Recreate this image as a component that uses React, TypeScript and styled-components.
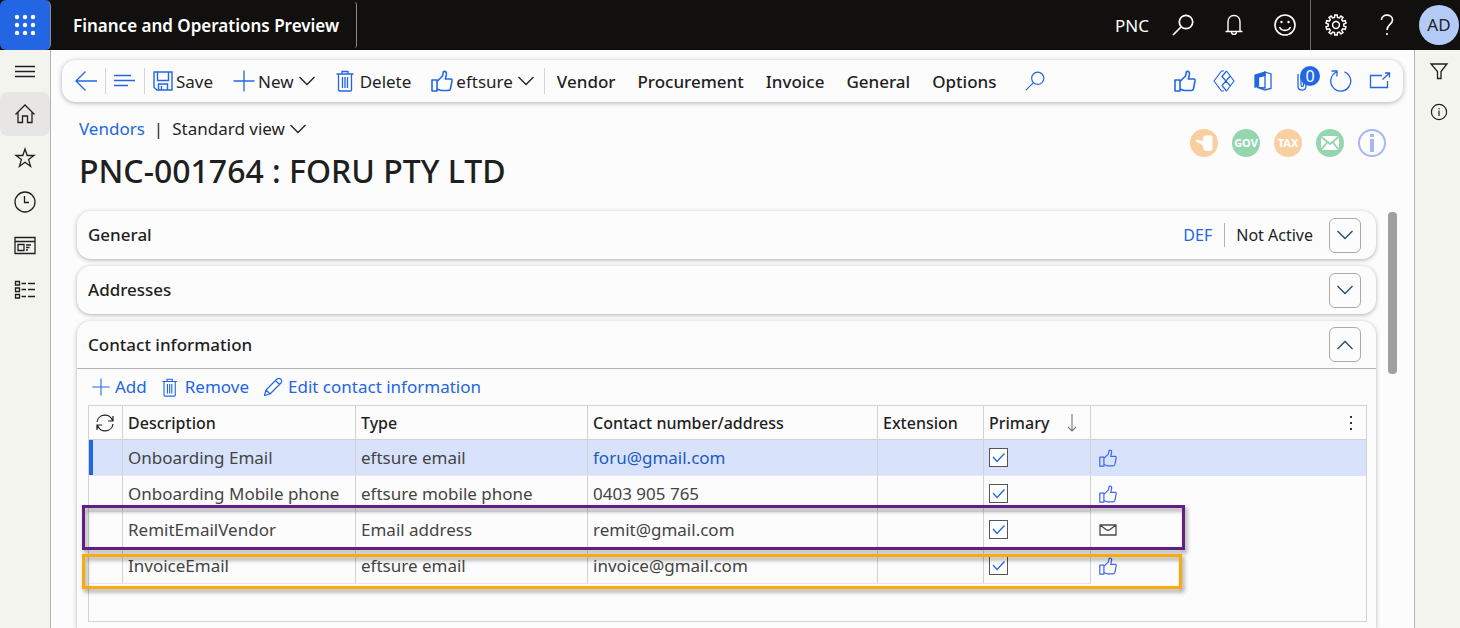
import React from "react";
import styled, { createGlobalStyle } from "styled-components";

const BLUE = "#2266e3";
const INK = "#1f1f1f";
const PAPER = "#fcfcfc";
const LINE = "#d2d2d2";

const GlobalStyle = createGlobalStyle`
  * { box-sizing: border-box; }
  body {
    margin: 0;
    background: ${PAPER};
    color: ${INK};
    font-family: "Noto Sans", "Open Sans", sans-serif;
    font-size: 17px;
    font-weight: 400;
    line-height: 24px;
    overflow: hidden;
  }
  button { font: inherit; color: inherit; background: none; border: 0; padding: 0; cursor: pointer; }
  svg { display: block; flex: none; }
`;

/* ---------- icons ---------- */

const Svg = ({ w = 22, h = w, box, sw = 1.3, children, ...rest }: any) => (
  <svg width={w} height={h} viewBox={box ?? `0 0 ${w} ${h}`} fill="none" stroke="currentColor" strokeWidth={sw} aria-hidden="true" {...rest}>
    {children}
  </svg>
);

const WaffleIcon = () => (
  <Svg w={22} stroke="none" fill="currentColor">
    {[3, 11, 19].map((y) => [3, 11, 19].map((x) => <circle key={`${x}${y}`} cx={x} cy={y} r="2.2" />))}
  </Svg>
);
const SearchIcon = ({ w = 22, sw = 1.5 }: { w?: number; sw?: number }) => (
  <Svg w={w} box="0 0 22 22" sw={sw}><circle cx="14" cy="8" r="6.7" /><path d="M9 13 L1 21" /></Svg>
);
const BellIcon = () => (
  <Svg sw={1.4}><path d="M5 17 V8 C5 4.2 7.5 1.5 11 1.5 S17 4.2 17 8 V17 M2.5 17.5 H19.5 M8.5 18 C8.5 21.2 13.5 21.2 13.5 18" /></Svg>
);
const SmileIcon = () => (
  <Svg sw={1.6}><circle cx="11" cy="11" r="10" /><path d="M5.5 13 C7.5 17.5 14.5 17.5 16.5 13" /><circle cx="7.5" cy="8" r="1.2" fill="currentColor" stroke="none" /><circle cx="14.5" cy="8" r="1.2" fill="currentColor" stroke="none" /></Svg>
);
const gearPath = (() => {
  const pts: string[] = [];
  const n = 10;
  for (let i = 0; i < n; i++) {
    [[-0.3, 7.8], [-0.2, 10.2], [0.2, 10.2], [0.3, 7.8]].forEach(([o, r]) => {
      const a = ((i + o) / n) * Math.PI * 2;
      pts.push(`${(11 + r * Math.sin(a)).toFixed(2)} ${(11 - r * Math.cos(a)).toFixed(2)}`);
    });
  }
  return `M${pts.join("L")}Z`;
})();
const GearIcon = () => <Svg sw={1.5}><path d={gearPath} /><circle cx="11" cy="11" r="3.4" /></Svg>;
const HelpIcon = () => (
  <Svg sw={1.6}><path d="M5.5 6 C5.5 -0.5 16.5 -0.5 16.5 6 C16.5 10.5 11 10.5 11 16" /><path d="M11 19 V21" /></Svg>
);
const MenuIcon = () => <Svg><path d="M1 6.5 H21 M1 11.500 H21 M1 16.5 H21" /></Svg>;
const HomeIcon = () => <Svg><path d="M1.5 11.5 L11 2 L20.5 11.5 M4 9.5 V19.5 H8.5 V13 H13.5 V19.5 H18 V9.5" /></Svg>;
const StarIcon = () => <Svg><path d="M11 2 L13.2 8.5 L20 8.5 L14.6 12.6 L16.6 19.3 L11 15.3 L5.4 19.3 L7.4 12.6 L2 8.5 L8.8 8.5 Z" /></Svg>;
const ClockIcon = () => <Svg><circle cx="11" cy="11" r="10" /><path d="M10.5 5 V11.5 H15" /></Svg>;
const WorkspaceIcon = () => (
  <Svg><path d="M1 2.500 H21 V18.500 H1 Z M1 6.500 H21 M4 9.500 H10 V15.500 H4 Z M12 10 H17 M12 12.500 H15.5 M12 15 H14" /></Svg>
);
const ModulesIcon = () => (
  <Svg><path d="M1.5 2.5 H5.5 V6 H1.5 Z M1.5 9 H5.5 V12.5 H1.5 Z M1.5 15.5 H5.5 V19 H1.5 Z M7.5 4.5 H12 M14 4.5 H21 M7.5 10.5 H12 M14 10.5 H21 M7.5 17.5 H12 M14 17.5 H21" /></Svg>
);
const BackIcon = () => <Svg><path d="M1 11 H22 M10.5 1.5 L1 11 L10.5 20.5" /></Svg>;
const LinesIcon = () => <Svg><path d="M0 5.5 H17 M0 10.5 H21 M0 15.5 H14" /></Svg>;
const SaveIcon = () => (
  <Svg w={20} sw={1.4}><path d="M1 1 H19 V19 H4 L1 16.5 Z M4.5 1 V9.5 H15.5 V1 M5.5 19 V13 H14.5 V19 M8.5 15 V19" /></Svg>
);
const PlusIcon = ({ w = 22 }: { w?: number }) => <Svg w={w} box="0 0 22 22"><path d="M11 0.5 V21.5 M0.5 11 H21.5" /></Svg>;
const TrashIcon = ({ w = 22 }: { w?: number }) => (
  <Svg w={w} box="-1 0 22 22"><path d="M0.5 4 H17.5 M6 4 V1.5 H12 V4 M2.5 4 V20 Q2.5 21 3.5 21 H14.5 Q15.5 21 15.5 20 V4 M6.5 7 V18 M9 7 V18 M11.5 7 V18" /></Svg>
);
const ThumbIcon = ({ w = 22, sw = 1.6 }: { w?: number; sw?: number }) => (
  <Svg w={w} box="0 0 22 22" sw={sw} strokeLinejoin="round">
    <path d="M1 10 H6 V21 H1 Z M6 11.5 L11.5 6 L12.5 1.5 C15 0.8 15.8 2.5 15.3 5 L14.3 9 H20 Q21.3 9.2 21 11 L19.5 18.5 Q19 20.5 17.5 20.5 H10 L6 19" />
  </Svg>
);
const ChevronIcon = ({ up = false }: { up?: boolean }) => (
  <Svg w={16} h={10}><path d={up ? "M0.5 9 L8 1.5 L15.5 9" : "M0.5 1 L8 8.5 L15.5 1"} /></Svg>
);
const DiamondIcon = () => (
  <Svg sw={1.2} strokeLinejoin="round"><path d="M11 1 H8.5 L1 11 L8.5 21 H11 M13.5 1 L21 11 L13.5 21 L9 15.5 L17.3 6 M13.5 1 L9 6.5 L17.3 16" /></Svg>
);
const OfficeIcon = () => (
  <Svg w={18} h={20}><path d="M11 1 L17 3 V17.5 L11 19 L3 16.5 L11 17 Z" /><path d="M1 4 L11 1 V4.5 L4.5 6 V15 L1 16.2 Z" fill="currentColor" /></Svg>
);
const ClipIcon = () => <Svg w={10} h={20}><path d="M1 3 V15 C1 20.5 9 20.5 9 15 V6 C9 2 4 2 4 6 V14 C4 16 6.5 16 6.5 14 V7" /></Svg>;
const RefreshIcon = () => <Svg><path d="M6.5 2 A10 10 0 1 0 14.5 1.8 M1.5 1 H7 V6.5" /></Svg>;
const PopoutIcon = () => <Svg><path d="M13 5.5 H1.5 V17.5 H18.5 V11 M13.500 9.500 L20 3.500 M16 3 H20.500 V7.500" /></Svg>;
const FilterIcon = () => <Svg w={20}><path d="M2 3 H18 L12 10.5 V17.5 H8.5 V10.5 Z" /></Svg>;
const InfoIcon = () => <Svg w={18} sw={1.2}><circle cx="9" cy="9" r="7.6" /><path d="M9 7.5 V13 M9 5 V6.3" /></Svg>;
const PencilIcon = () => <Svg w={20} sw={1.2} strokeLinejoin="round"><path d="M1.5 18.5 L3 13 L14 2 Q16 0.5 17.8 2.2 Q19.5 4 18 6 L7 17 Z M3 13 L7 17 M12.5 3.5 L16.5 7.5" /></Svg>;
const SyncIcon = () => <Svg w={18} sw={1.2}><path d="M1 8 A8 8 0 0 1 16.5 6.5 M17 2 V7 H12 M17 10 A8 8 0 0 1 1.5 11.5 M1 16 V11 H6" /></Svg>;
const SortIcon = () => <Svg w={10} h={18} stroke="#777" sw={1.1}><path d="M5 0 V17 M1 13 L5 17 L9 13" /></Svg>;
const MoreIcon = () => <Svg w={4} h={14} fill="#333" stroke="none"><rect x="1" y="0" width="2" height="2" /><rect x="1" y="6" width="2" height="2" /><rect x="1" y="12" width="2" height="2" /></Svg>;
const MailIcon = () => <Svg w={18} h={12} stroke="#4a4a4a"><path d="M1 1 H17 V11 H1 Z M1 1 L7 5.5 Q9 7 11 5.5 L17 1" /></Svg>;
const TickIcon = () => <Svg w={20}><path d="M4 9 L8 13.5 L15.5 5.5" /></Svg>;
const HandBadge = () => (
  <Svg w={28} stroke="none"><circle cx="14" cy="14" r="14" fill="#f9cfa1" /><path d="M5.500 12 Q6 10.500 8 10.800 L13 12 V8 L15 6.500 H21 Q22.500 6.500 22.500 8 V20 Q22 22 20 22 H16 Q13 21 13 18 V16.500 Z" fill="#fff" /></Svg>
);
const MailBadge = () => (
  <Svg w={28} sw={2}><circle cx="14" cy="14" r="14" fill="#95d6b1" stroke="none" /><rect x="5" y="7" width="18" height="14" fill="#fff" stroke="none" /><path d="M5 7.5 L14 15 L23 7.5 M5 21 L11 13.5 M23 21 L17 13.5" stroke="#95d6b1" /></Svg>
);
const InfoBadge = () => (
  <Svg w={28} stroke="#a6b8f4" sw={2}><circle cx="14" cy="14" r="13" /><path d="M14 10 V23 M14 5 V8" strokeWidth="4" /></Svg>
);

/* ---------- shell ---------- */

const Page = styled.div`
  height: 100vh;
  display: grid;
  grid-template: 50px minmax(0, 1fr) / 51px minmax(0, 1fr) 46px;
`;
const TopBar = styled.header`
  grid-column: 1 / -1;
  display: flex;
  align-items: center;
  background: #11100f;
  color: #fff;
`;
const Waffle = styled.button`
  display: grid;
  place-items: center;
  width: 51px;
  height: 50px;
  background: ${BLUE};
  border-right: 1px solid #8a8a8a;
  border-radius: 6px;
`;
const Product = styled.div`
  display: flex;
  align-items: center;
  height: 46px;
  margin-right: auto;
  padding: 2px 17px 0 22px;
  border-right: 1px solid #8a8a8a;
  border-radius: 0 3px 3px 0;
  font-weight: 600;
`;
const Company = styled.span`
  padding: 2px 8px 0 0;
`;
const TopButton = styled.button<{ $divided?: boolean; $account?: boolean }>`
  display: grid;
  place-items: center;
  width: ${(p) => (p.$account ? 48 : 51)}px;
  height: 50px;
  ${(p) => p.$divided && "border-left: 1px solid #6b6b6b;"}
`;
const Avatar = styled.span`
  display: grid;
  place-items: center;
  width: 40px;
  height: 40px;
  margin-left: 6px;
  border-radius: 50%;
  background: #b5cbf7;
  color: #222;
`;
const Rail = styled.nav`
  display: flex;
  flex-direction: column;
  background: #f4f4ef;
  border-right: 1px solid #b4b4b4;
`;
const RailButton = styled.button<{ $active?: boolean }>`
  display: grid;
  place-items: center;
  height: 44px;
  border-radius: 8px;
  background: ${(p) => (p.$active ? "#e8e6e5" : "transparent")};
  &:first-child { height: 42px; }
`;
const SideRail = styled.aside`
  display: flex;
  flex-direction: column;
  background: #f4f4ef;
  border-left: 1px solid #b4b4b4;
`;
const SideButton = styled.button`
  display: grid;
  place-items: center;
  height: 41px;
  padding-left: 2px;
`;
const Main = styled.main`
  display: flex;
  flex-direction: column;
  min-width: 0;
  padding: 10px 11px 0;
  overflow: hidden;
`;

/* ---------- action bar ---------- */

const ActionBar = styled.div`
  display: flex;
  align-items: center;
  flex: none;
  height: 42px;
  padding: 0 12px 0 13px;
  background: ${PAPER};
  border-radius: 14px;
  box-shadow: 0 1px 5px rgba(0, 0, 0, 0.3);
`;
const IconButton = styled.button`
  display: grid;
  place-items: center;
  width: 22px;
  height: 42px;
  color: ${BLUE};
`;
const Divider = styled.span<{ $wide?: boolean }>`
  flex: none;
  width: 1px;
  height: 26px;
  margin: 0 ${(p) => (p.$wide ? 10 : 8)}px;
  background: #d4d4d4;
`;
const Commands = styled.div`
  display: flex;
  gap: 20px;
`;
const Command = styled.button`
  display: flex;
  align-items: center;
  gap: 3px;
  height: 42px;
  & > svg:first-child { color: ${BLUE}; }
  & > span { padding-top: 2px; }
  & > span + svg { margin-left: 2px; }
`;
const Tabs = styled.div`
  display: flex;
  gap: 22px;
  margin: 0 28px 0 2px;
`;
const Tab = styled.button`
  padding-top: 2px;
  font-weight: 500;
`;
const Tools = styled.div`
  display: flex;
  gap: 17px;
  margin-left: auto;
`;
const Attachments = styled(IconButton)`
  position: relative;
`;
const Count = styled.span`
  position: absolute;
  top: 6px;
  left: 9px;
  width: 20px;
  height: 20px;
  border-radius: 10px;
  background: ${BLUE};
  color: #fff;
  font-size: 16px;
  line-height: 20px;
`;

/* ---------- record heading ---------- */

const Heading = styled.div`
  display: flex;
  justify-content: space-between;
  flex: none;
  height: 108px;
  padding: 15px 17px 0 17px;
`;
const Crumbs = styled.div`
  display: flex;
  gap: 9px;
  a { color: ${BLUE}; text-decoration: none; }
`;
const ViewButton = styled.button`
  display: flex;
  align-items: center;
  gap: 5px;
`;
const Title = styled.h1`
  margin: 8px 0 0;
  font-size: 32px;
  line-height: 44px;
  font-weight: 500;
`;
const Badges = styled.div`
  display: flex;
  gap: 14px;
  padding-top: 12px;
`;
const TextBadge = styled.span<{ $color: string }>`
  width: 28px;
  height: 28px;
  border-radius: 50%;
  background: ${(p) => p.$color};
  color: #fff;
  font-size: 11px;
  font-weight: 700;
  line-height: 28px;
  text-align: center;
`;

/* ---------- sections ---------- */

const ScrollArea = styled.div`
  flex: 1;
  display: flex;
  gap: 12px;
  min-height: 0;
  padding: 1px 6px 0 15px;
`;
const ScrollThumb = styled.div`
  width: 9px;
  height: 162px;
  margin-top: 1px;
  border-radius: 4px;
  background: #a19f9d;
`;
const Sections = styled.div`
  flex: 1;
  display: flex;
  flex-direction: column;
  gap: 7px;
  min-width: 0;
`;
const Card = styled.section<{ $open?: boolean }>`
  flex: ${(p) => (p.$open ? "1 0 auto" : "none")};
  background: ${PAPER};
  border-radius: ${(p) => (p.$open ? "14px 14px 0 0" : "14px")};
  box-shadow: 0 1px 4px rgba(0, 0, 0, 0.3);
`;
const CardHead = styled.div<{ $open?: boolean }>`
  display: flex;
  align-items: center;
  height: 48px;
  padding: 0 15px 0 11px;
  border-bottom: ${(p) => (p.$open ? "1px solid #b4b4b4" : "0")};
`;
const CardTitle = styled.h2`
  margin: 0 auto 0 0;
  font-size: 17px;
  font-weight: 500;
`;
const Summary = styled.span`
  display: flex;
  align-items: center;
  gap: 12px;
  margin-right: 16px;
  font-size: 16px;
  a { color: ${BLUE}; text-decoration: none; }
  span { padding-left: 11px; border-left: 1px solid #b4b4b4; }
`;
const Expander = styled.button`
  display: grid;
  place-items: center;
  width: 32px;
  height: 35px;
  border: 1px solid #aaa;
  border-radius: 6px;
  color: #264a66;
`;
const GridTools = styled.div`
  display: flex;
  gap: 14px;
  height: 36px;
  padding-left: 15px;
  color: ${BLUE};
`;
const GridTool = styled.button`
  display: flex;
  align-items: center;
  gap: 5px;
`;

/* ---------- contact grid ---------- */

const GridFrame = styled.div`
  position: relative;
  height: 217px;
  margin: 0 9px 0 11px;
  border: 1px solid ${LINE};
`;
const Table = styled.table`
  width: 100%;
  table-layout: fixed;
  border-collapse: separate;
  border-spacing: 0;
`;
const Th = styled.th`
  height: 34px;
  padding: 0 5px;
  border-bottom: 1px solid ${LINE};
  border-right: 1px solid ${LINE};
  font-size: 16px;
  font-weight: 500;
  text-align: left;
  &:first-child { padding-left: 7px; }
  &:last-child { border-right: 0; padding-right: 13px; }
`;
const HeadCell = styled.span<{ $end?: boolean }>`
  display: flex;
  align-items: center;
  justify-content: ${(p) => (p.$end ? "flex-end" : "flex-start")};
  gap: 18px;
`;
const Row = styled.tr<{ $selected?: boolean }>`
  background: ${(p) => (p.$selected ? "#d8e3fb" : "transparent")};
  td:first-child { box-shadow: ${(p) => (p.$selected ? `inset 4px 0 ${BLUE}` : "none")}; }
`;
const Td = styled.td`
  height: 36px;
  padding: 0 5px;
  border-right: 1px solid ${LINE};
  border-bottom: 1px solid #e4e8ec;
  color: #444;
  a { color: #2059c4; text-decoration: none; }
  &:last-child { border: 0; padding-left: 8px; color: #3f68ee; }
`;
const Check = styled.label`
  display: grid;
  width: 20px;
  color: ${BLUE};
  & > * { grid-area: 1 / 1; }
  input {
    appearance: none;
    width: 19px;
    height: 19px;
    margin: 0;
    border: 1px solid #555;
    background: #fff;
  }
  svg { pointer-events: none; }
`;
const Highlight = styled.div<{ $color: string; $top: number; $width: number; $height: number }>`
  position: absolute;
  top: ${(p) => p.$top}px;
  left: -7px;
  width: ${(p) => p.$width}px;
  height: ${(p) => p.$height}px;
  border: 3px solid ${(p) => p.$color};
  filter: drop-shadow(2px 3px 2px rgba(0, 0, 0, 0.4));
  pointer-events: none;
`;

const contacts = [
  { name: "Onboarding Email", type: "eftsure email", value: "foru@gmail.com", verified: true },
  { name: "Onboarding Mobile phone", type: "eftsure mobile phone", value: "0403 905 765", verified: true },
  { name: "RemitEmailVendor", type: "Email address", value: "remit@gmail.com", verified: false },
  { name: "InvoiceEmail", type: "eftsure email", value: "invoice@gmail.com", verified: true },
];

const railItems = [
  ["Expand navigation", <MenuIcon />],
  ["Home", <HomeIcon />],
  ["Favorites", <StarIcon />],
  ["Recent", <ClockIcon />],
  ["Workspaces", <WorkspaceIcon />],
  ["Modules", <ModulesIcon />],
] as const;

const ContactGrid = () => (
  <GridFrame>
    <Table>
      <colgroup>
        {[34, 233, 232, 290, 106, 107].map((w, i) => <col key={i} style={{ width: w }} />)}
        <col />
      </colgroup>
      <thead>
        <tr>
          <Th><HeadCell><SyncIcon /></HeadCell></Th>
          <Th>Description</Th>
          <Th>Type</Th>
          <Th>Contact number/address</Th>
          <Th>Extension</Th>
          <Th><HeadCell>Primary<SortIcon /></HeadCell></Th>
          <Th><HeadCell $end><MoreIcon /></HeadCell></Th>
        </tr>
      </thead>
      <tbody>
        {contacts.map((c, i) => (
          <Row key={c.name} $selected={i === 0}>
            <Td />
            <Td>{c.name}</Td>
            <Td>{c.type}</Td>
            <Td>{i === 0 ? <a href="#contact">{c.value}</a> : c.value}</Td>
            <Td />
            <Td><Check><input type="checkbox" defaultChecked aria-label={`${c.name} primary`} /><TickIcon /></Check></Td>
            <Td>{c.verified ? <ThumbIcon w={18} sw={1.5} /> : <MailIcon />}</Td>
          </Row>
        ))}
      </tbody>
    </Table>
    <Highlight $color="#5f1f86" $top={99} $width={1103} $height={45} />
    <Highlight $color="#f8ab0a" $top={148} $width={1100} $height={35} />
  </GridFrame>
);

export default function App() {
  return (
    <>
      <GlobalStyle />
      <Page>
        <TopBar>
          <Waffle aria-label="App launcher"><WaffleIcon /></Waffle>
          <Product>Finance and Operations Preview</Product>
          <Company>PNC</Company>
          <TopButton aria-label="Search"><SearchIcon sw={1.7} /></TopButton>
          <TopButton aria-label="Notifications"><BellIcon /></TopButton>
          <TopButton aria-label="Feedback"><SmileIcon /></TopButton>
          <TopButton $divided aria-label="Settings"><GearIcon /></TopButton>
          <TopButton aria-label="Help"><HelpIcon /></TopButton>
          <TopButton $account aria-label="Account"><Avatar>AD</Avatar></TopButton>
        </TopBar>

        <Rail>
          {railItems.map(([label, icon], i) => (
            <RailButton key={label} aria-label={label} $active={i === 1}>{icon}</RailButton>
          ))}
        </Rail>

        <Main>
          <ActionBar>
            <IconButton aria-label="Back"><BackIcon /></IconButton>
            <Divider />
            <IconButton aria-label="Show list"><LinesIcon /></IconButton>
            <Divider />
            <Commands>
              <Command><SaveIcon /><span>Save</span></Command>
              <Command><PlusIcon /><span>New</span><ChevronIcon /></Command>
              <Command><TrashIcon /><span>Delete</span></Command>
              <Command><ThumbIcon /><span>eftsure</span><ChevronIcon /></Command>
            </Commands>
            <Divider $wide />
            <Tabs>
              {["Vendor", "Procurement", "Invoice", "General", "Options"].map((t) => <Tab key={t}>{t}</Tab>)}
            </Tabs>
            <IconButton aria-label="Search actions"><SearchIcon w={20} sw={1.3} /></IconButton>
            <Tools>
              <IconButton aria-label="Approve"><ThumbIcon /></IconButton>
              <IconButton aria-label="Apps"><DiamondIcon /></IconButton>
              <IconButton aria-label="Open in Office"><OfficeIcon /></IconButton>
              <Attachments aria-label="Attachments"><ClipIcon /><Count>0</Count></Attachments>
              <IconButton aria-label="Refresh"><RefreshIcon /></IconButton>
              <IconButton aria-label="Open in new window"><PopoutIcon /></IconButton>
            </Tools>
          </ActionBar>

          <Heading>
            <div>
              <Crumbs>
                <a href="#vendors">Vendors</a>
                <span>|</span>
                <ViewButton>Standard view<ChevronIcon /></ViewButton>
              </Crumbs>
              <Title>PNC-001764 : FORU PTY LTD</Title>
            </div>
            <Badges>
              <HandBadge />
              <TextBadge $color="#95d6b1">GOV</TextBadge>
              <TextBadge $color="#f9cfa1">TAX</TextBadge>
              <MailBadge />
              <InfoBadge />
            </Badges>
          </Heading>

          <ScrollArea>
            <Sections>
              <Card>
                <CardHead>
                  <CardTitle>General</CardTitle>
                  <Summary><a href="#def">DEF</a><span>Not Active</span></Summary>
                  <Expander aria-label="Expand General"><ChevronIcon /></Expander>
                </CardHead>
              </Card>
              <Card>
                <CardHead>
                  <CardTitle>Addresses</CardTitle>
                  <Expander aria-label="Expand Addresses"><ChevronIcon /></Expander>
                </CardHead>
              </Card>
              <Card $open>
                <CardHead $open>
                  <CardTitle>Contact information</CardTitle>
                  <Expander aria-label="Collapse Contact information"><ChevronIcon up /></Expander>
                </CardHead>
                <GridTools>
                  <GridTool><PlusIcon w={18} />Add</GridTool>
                  <GridTool><TrashIcon w={19} />Remove</GridTool>
                  <GridTool><PencilIcon />Edit contact information</GridTool>
                </GridTools>
                <ContactGrid />
              </Card>
            </Sections>
            <ScrollThumb />
          </ScrollArea>
        </Main>

        <SideRail>
          <SideButton aria-label="Filter"><FilterIcon /></SideButton>
          <SideButton aria-label="Information"><InfoIcon /></SideButton>
        </SideRail>
      </Page>
    </>
  );
}
